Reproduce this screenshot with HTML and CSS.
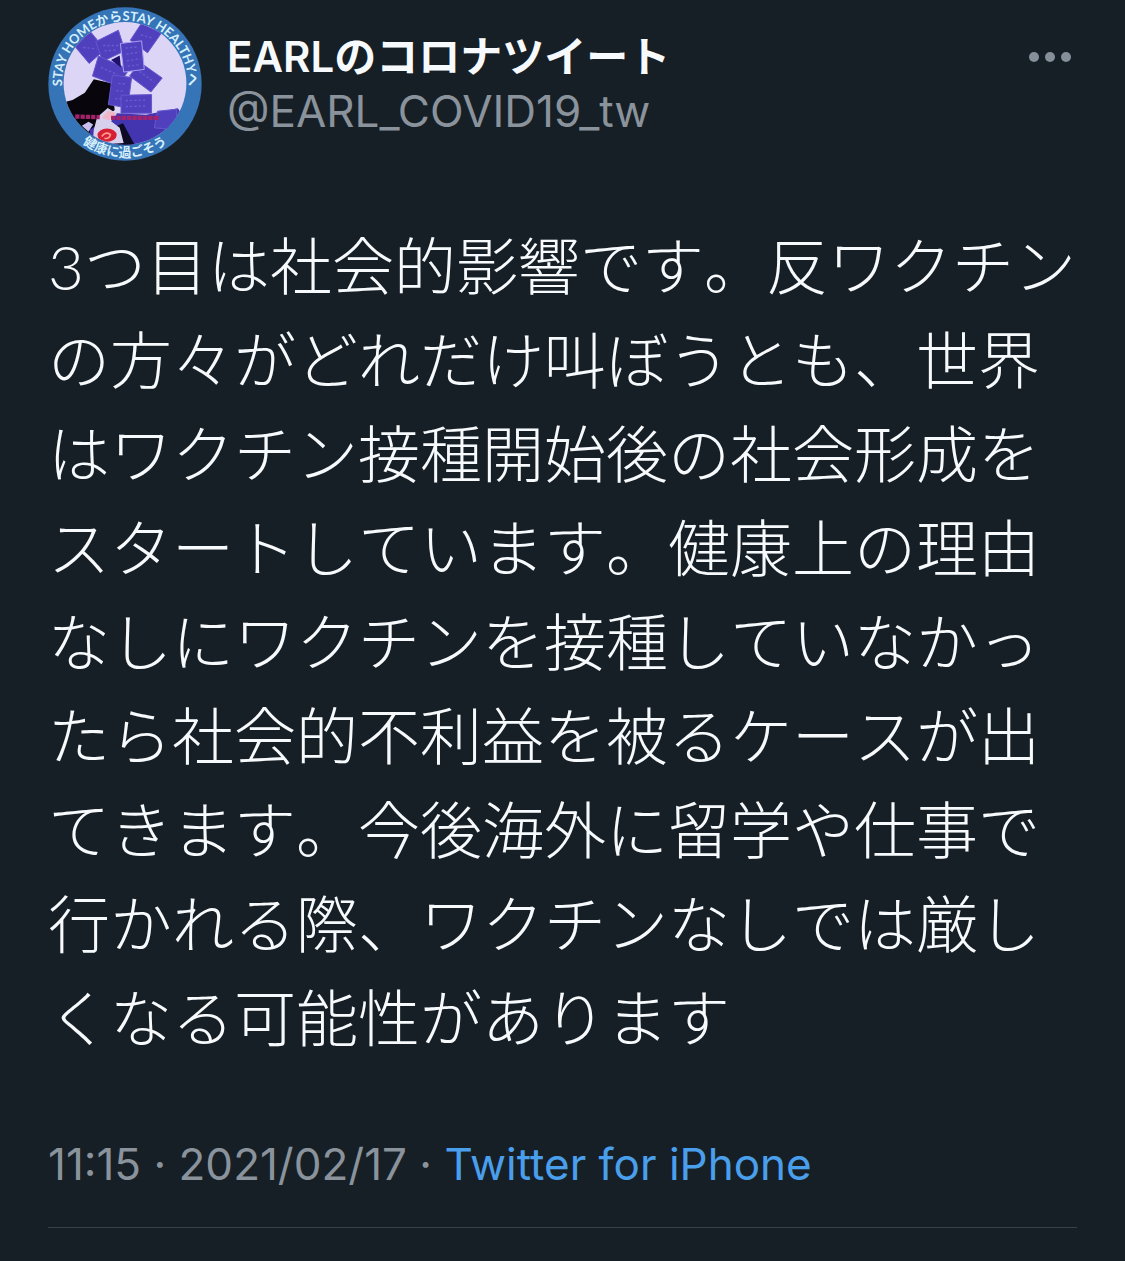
FILE: index.html
```html
<!DOCTYPE html>
<html lang="ja">
<head>
    <meta charset="UTF-8">
    <meta name="viewport" content="width=device-width, initial-scale=1.0">
    <title>EARLのコロナツイート</title>
    <link rel="stylesheet" href="styles.css">
</head>
<body>
    <article class="tweet">
        <header class="tweet-header">
            <svg class="avatar" viewBox="24 20 464 464" role="img" aria-label="EARLのコロナツイート">
                <defs>
                    <clipPath id="photo"><circle cx="256" cy="250" r="185"/></clipPath>
                    <path id="top-arc" d="M70 290 A190 190 0 1 1 442 290"/>
                    <path id="bottom-arc" d="M36 252 A220 220 0 0 0 476 252"/>
                </defs>
                <circle cx="256" cy="252" r="231" fill="#3674b8"/>
                <g clip-path="url(#photo)">
                    <rect x="60" y="60" width="400" height="400" fill="#ddd5f6"/>
                    <path d="M60 310 L98 300 L135 278 L162 238 L215 250 L225 330 L200 350 L160 440 L60 440 Z" fill="#08060c"/>
                    <path d="M150 390 L230 340 L320 345 L415 325 L440 360 L380 440 L150 440 Z" fill="#4334b0"/>
                    <path d="M215 385 L250 370 L285 435 L225 440 Z" fill="#0d0a24"/>
                    <g fill="#5140bd" stroke="#6657cf" stroke-width="3">
                        <path d="M106 140 L150 92 L196 148 L148 190 Z"/>
                        <path d="M168 124 L236 90 L256 152 L188 184 Z"/>
                        <path d="M305 70 L366 98 L324 158 L272 120 Z"/>
                        <path d="M176 168 L268 208 L236 258 L158 228 Z"/>
                        <path d="M300 186 L368 234 L334 276 L270 228 Z"/>
                        <path d="M218 226 L276 232 L264 324 L206 314 Z"/>
                        <path d="M244 286 L336 284 L336 340 L244 340 Z"/>
                        <path d="M354 334 L412 328 L410 390 L344 384 Z"/>
                        <path d="M242 130 L306 122 L314 208 L252 216 Z" stroke="#a99cf2"/>
                    </g>
                    <path d="M214 180 L240 166 L244 202 Z" fill="#20106e"/>
                    <g fill="none" stroke="#6a5bd2" stroke-width="4" stroke-dasharray="7 6">
                        <path d="M130 142 L170 146 M190 136 L236 136 M194 152 L230 150"/>
                        <path d="M258 144 L296 140 M260 162 L300 156 M262 182 L302 176 M264 198 L302 194"/>
                        <path d="M236 250 L256 252 M230 272 L254 274 M226 296 L250 298"/>
                        <path d="M258 302 L322 300 M258 320 L322 318 M300 214 L344 246 M304 104 L340 114 M184 202 L234 224"/>
                    </g>
                    <path d="M162 390 L172 352 L204 324 L232 342 L214 364 L240 384 L252 430 L158 436 Z" fill="#d8d1ee"/>
                    <path d="M186 354 L206 332 L230 340 L208 362 Z" fill="#efb6c8"/>
                    <path d="M106 350 L180 352 M214 354 L360 354" stroke="#a3226a" stroke-width="13" stroke-dasharray="13 3" fill="none"/>
                    <path d="M126 378 L146 366 L160 374 L146 396 Z" fill="#c9bff0"/>
                    <ellipse cx="202" cy="406" rx="29" ry="20" fill="#d61f32"/>
                    <path d="M186 410 Q196 394 212 404 Q210 418 194 416" stroke="#ff9a90" stroke-width="5" fill="none"/>
                </g>
                <text class="avatar-text"><textPath href="#top-arc" startOffset="50%">STAY HOMEからSTAY HEALTHYへ</textPath></text>
                <text class="avatar-text"><textPath href="#bottom-arc" startOffset="50%">健康に過ごそう</textPath></text>
            </svg>
            <div class="author">
                <h1 class="name">EARLのコロナツイート</h1>
                <p class="handle">@EARL_COVID19_tw</p>
            </div>
            <button class="more" type="button" aria-label="その他">
                <svg class="more-icon" viewBox="0 0 42 10" aria-hidden="true">
                    <circle cx="5" cy="5" r="5"/>
                    <circle cx="21" cy="5" r="5"/>
                    <circle cx="37" cy="5" r="5"/>
                </svg>
            </button>
        </header>
        <p class="tweet-text">3つ目は社会的影響です。反ワクチンの方々がどれだけ叫ぼうとも、世界はワクチン接種開始後の社会形成をスタートしています。健康上の理由なしにワクチンを接種していなかったら社会的不利益を被るケースが出てきます。今後海外に留学や仕事で行かれる際、ワクチンなしでは厳しくなる可能性があります</p>
        <footer class="meta">
            <time datetime="2021-02-17T11:15">11:15 · 2021/02/17</time> · <a class="source" href="#">Twitter for iPhone</a>
        </footer>
    </article>
</body>
</html>
```
FILE: styles.css
```css
body {
    margin: 0;
    background-color: #171f26;
    color: #f7fafc;
    font-family: Inter, "Noto Sans CJK JP", sans-serif;
}
.tweet {
    padding: 7px 48px 32px;
}
.tweet-header {
    display: flex;
    align-items: flex-start;
}
.avatar {
    width: 154px;
    height: 154px;
    flex-shrink: 0;
}
.avatar-text {
    fill: #d5f0fb;
    font-size: 39px;
    font-weight: 700;
    font-family: Lato, "Noto Sans CJK JP", sans-serif;
    text-anchor: middle;
}
.author {
    flex: 1;
    margin-left: 25px;
    padding-top: 23px;
}
.name, .handle {
    margin: 0;
    line-height: 54px;
}
.name {
    font-size: 42px;
    font-weight: 600;
}
.handle {
    color: #8a939c;
    font-size: 44px;
    font-weight: 400;
}
.more {
    display: flex;
    margin-top: 37px;
    padding: 8px 6px;
    border: none;
    background: none;
    cursor: pointer;
}
.more-icon {
    width: 42px;
    height: 10px;
    fill: #858f99;
}
.tweet-text {
    margin: 58px -8px 0 0;
    font-family: Lato, "Noto Sans CJK JP", sans-serif;
    font-size: 62px;
    font-weight: 300;
    font-kerning: none;
    line-height: 94px;
}
.meta {
    margin-top: 72px;
    padding-bottom: 36px;
    border-bottom: 1px solid #37414a;
    color: #8a939c;
    font-size: 44px;
    line-height: 54px;
}
.source {
    color: #4a9fec;
    text-decoration: none;
}
```
